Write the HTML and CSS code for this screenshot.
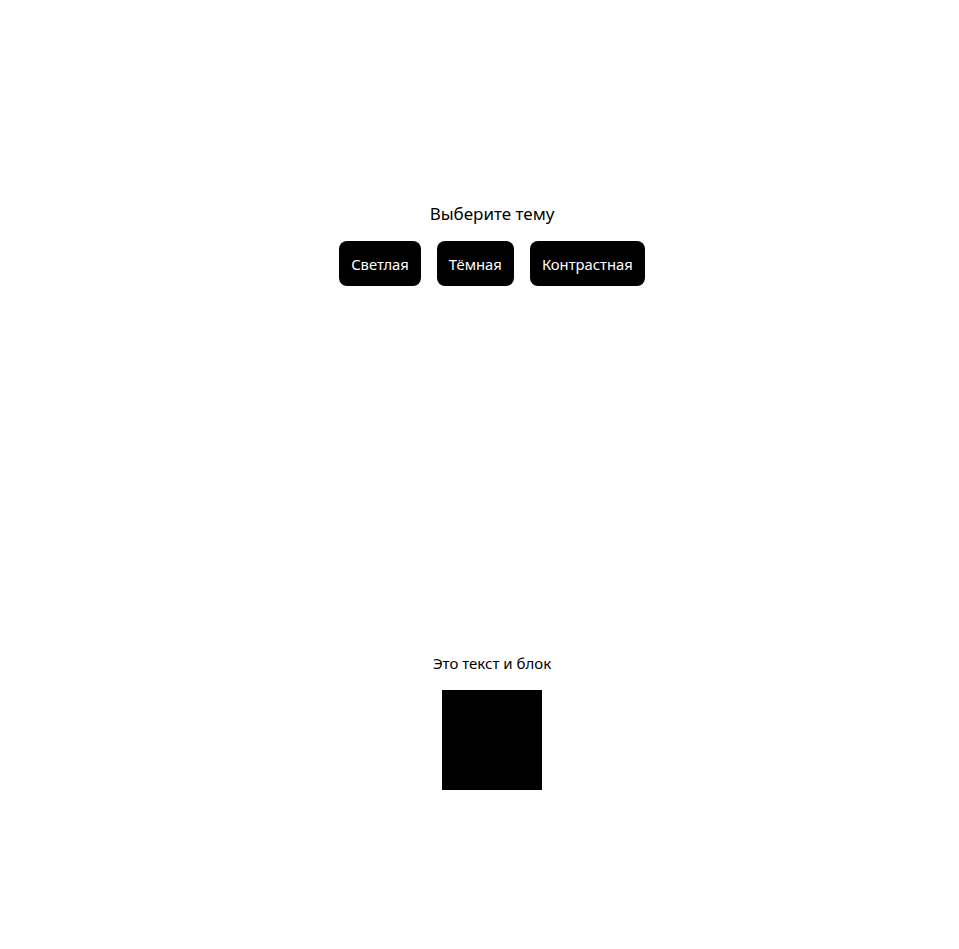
FILE: index.html
```html
<!DOCTYPE html>
<html lang="ru">
<head>
<meta charset="utf-8">
<title>Темы</title>
<link rel="stylesheet" href="styles.css">
</head>
<body>
<div class="page">
  <section class="theme-picker">
    <p class="theme-title">Выберите тему</p>
    <div class="theme-buttons">
      <button class="theme-btn">Светлая</button>
      <button class="theme-btn">Тёмная</button>
      <button class="theme-btn">Контрастная</button>
    </div>
  </section>
  <section class="demo">
    <p class="demo-text">Это текст и блок</p>
    <div class="demo-block"></div>
  </section>
</div>
</body>
</html>
```

FILE: styles.css
```css
html, body {
  margin: 0;
  padding: 0;
  background: #fff;
  color: #000;
  font-family: "Noto Sans", "Open Sans", sans-serif;
}
.page {
  padding-left: 25px;
  display: flex;
  flex-direction: column;
  align-items: center;
}
.theme-picker {
  padding-top: 202px;
  display: flex;
  flex-direction: column;
  align-items: center;
}
.theme-title {
  margin: 0;
  font-size: 17px;
  line-height: 24px;
}
.theme-buttons {
  margin-top: 15px;
  display: flex;
  gap: 16px;
}
.theme-btn {
  height: 45px;
  padding: 0 12px;
  border: none;
  border-radius: 8px;
  background: #000;
  color: #fff;
  font-family: inherit;
  font-size: 14.8px;
}
.demo {
  padding-top: 367px;
  display: flex;
  flex-direction: column;
  align-items: center;
}
.demo-text {
  margin: 0;
  font-size: 15px;
  line-height: 20px;
}
.demo-block {
  margin-top: 17px;
  width: 100px;
  height: 100px;
  background: #000;
}
```
